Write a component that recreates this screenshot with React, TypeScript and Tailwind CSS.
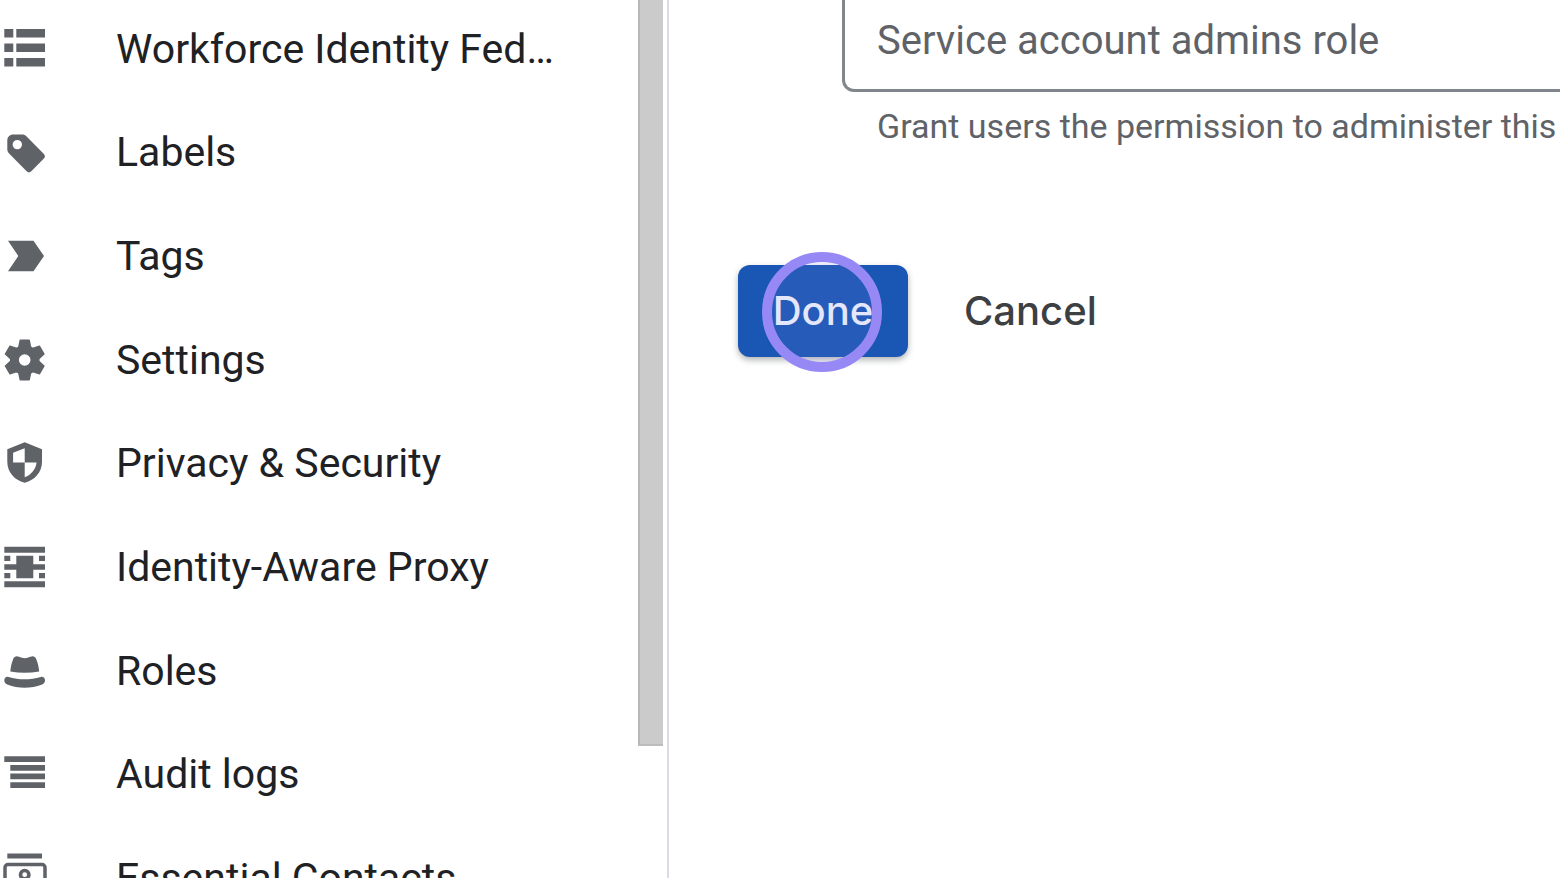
import type { ReactNode } from "react";

type NavItem = { label: string; icon: ReactNode };

const ITEMS: NavItem[] = [
  {
    label: "Workforce Identity Federation",
    icon: (
      <path d="M4.3 6h9v8.5h-9zM16.3 6H45v8.5H16.3zM4.3 20.4h9v8.5h-9zM16.3 20.4H45v8.5H16.3zM4.3 35h9v8.5h-9zM16.3 35H45v8.5H16.3z" />
    ),
  },
  {
    label: "Labels",
    icon: (
      <path
        fillRule="evenodd"
        transform="translate(0 -1.7)"
        d="M13.300 10.300H22c1.800 0 3.300.6 4.600 1.800L43.900 29.800c1.400 1.500 1.400 3 0 4.500L31.300 47c-1.500 1.500-3.200 1.500-4.700 0L9.100 29.300c-1.200-1.300-1.800-2.600-1.800-4.300V16.300c0-3.500 2.500-6 6-6zM17.300 15.600a4.700 4.700 0 1 0 0 9.400 4.700 4.700 0 0 0 0-9.400z"
      />
    ),
  },
  {
    label: "Tags",
    icon: <path d="M8 10.700h25.500L44 26 33.500 41.300H8L18.300 26z" />,
  },
  {
    label: "Settings",
    icon: (
      <g transform="translate(24.700 26)">
        <circle r="10.300" fill="none" stroke="currentColor" strokeWidth="9" />
        {[0, 60, 120, 180, 240, 300].map((angle) => (
          <path
            key={angle}
            transform={`rotate(${angle})`}
            d="M-6.800 -12L-5.200 -19.800Q-5.100 -20.400 -4.500 -20.400H4.500Q5.100 -20.400 5.200 -19.800L6.800 -12z"
          />
        ))}
      </g>
    ),
  },
  {
    label: "Privacy & Security",
    icon: (
      <path
        fillRule="evenodd"
        transform="translate(0 -0.7)"
        d="M24.700 6L42 13v12.500c0 10-7 18.500-17.300 21C14.300 44 7.300 35.500 7.300 25.500V13zM24.700 12l-11.600 4.500v9.800h11.600zM24.700 26.300V41c6.500-2.300 11-7.800 11.900-14.700z"
      />
    ),
  },
  {
    label: "Identity-Aware Proxy",
    icon: (
      <path d="M4.300 5.700H45v6H4.300zM4.300 40.300H45v6H4.300zM4.300 23.300H45v5.500H4.300zM16.300 14.700h17v22.500h-17zM4.300 14.700h6V20h-6zM39 14.700h6V20h-6zM4.300 31.900h6v5.300h-6zM39 31.900h6v5.300h-6z" />
    ),
  },
  {
    label: "Roles",
    icon: (
      <>
        <path d="M10.300 26.500c.4-4.200 1.300-8.800 2.900-12.500 1-2.600 3.300-3.500 5.800-2.300 3.900 1.900 7.500 1.900 11.400 0 2.500-1.200 4.800-.3 5.800 2.300 1.600 3.700 2.600 8.300 3 12.500-9.600 1.800-19.300 1.800-28.900 0z" />
        <path d="M8.500 31.900c10.800 3.200 21.500 3.200 32.300 0 2.200-.6 4.200.8 4.200 3.300 0 2-1 3.500-2.900 4.300-11.600 4.300-23.300 4.300-34.900 0-1.900-.8-2.900-2.300-2.900-4.300 0-2.500 2-3.900 4.200-3.300z" />
      </>
    ),
  },
  {
    label: "Audit logs",
    icon: (
      <path d="M4.300 8.300H45v5.800H4.300zM10.300 16.900H45v5.800H10.300zM10.300 25.500H45v5.800H10.300zM10.300 34.300H45v5.800H10.300z" />
    ),
  },
  {
    label: "Essential Contacts",
    icon: (
      <>
        <path d="M7.300 1.400H42v5H7.300z" />
        <rect x="5" y="12.500" width="40" height="32" rx="3" fill="none" stroke="currentColor" strokeWidth="3.500" />
        <circle cx="24.700" cy="22.700" r="4.200" fill="none" stroke="currentColor" strokeWidth="3.600" />
      </>
    ),
  },
];

function Sidebar() {
  return (
    <aside className="flex h-full w-[669px] shrink-0 overflow-hidden border-r-2 border-[#dadbe3] pr-1">
      <nav aria-label="IAM & Admin" className="min-w-0 flex-1 pr-20">
        <ul className="-mt-[3px] grid h-[933px] auto-rows-fr">
          {ITEMS.map(({ label, icon }) => (
            <li key={label} className="min-w-0">
              <a href="#" className="flex h-full items-center gap-16 text-[#202124]">
                <svg viewBox="0 0 52 52" aria-hidden="true" className="size-[52px] shrink-0 fill-current text-[#5f6368]">
                  {icon}
                </svg>
                <span className="min-w-0 truncate text-[41px] leading-12">{label}</span>
              </a>
            </li>
          ))}
        </ul>
      </nav>
      <div className="h-[746px] w-[25px] shrink-0 border-b-2 border-l-2 border-b-[#bcbcbc] border-l-[#b8b8b8] bg-[#cbcbcb]" />
    </aside>
  );
}

export default function App() {
  return (
    <div className="flex h-screen overflow-hidden bg-white font-[Roboto,sans-serif]">
      <Sidebar />
      <main className="min-w-0 flex-1 overflow-hidden pl-[69px]">
        <div className="w-[1100px] pl-26">
          <input
            type="text"
            aria-label="Service account admins role"
            aria-describedby="admins-role-hint"
            placeholder="Service account admins role"
            className="block h-[92px] w-full rounded-b-xl border-3 border-t-0 border-[#80868b] px-8 pb-2 text-[40px] text-[#5f6368] outline-none placeholder:text-[#5f6368]"
          />
          <p id="admins-role-hint" className="mt-[10px] pl-[35px] text-[34px] leading-12 whitespace-nowrap text-[#5f6368]">
            Grant users the permission to administer this service account
          </p>
        </div>
        <div className="mt-[115px] flex items-center gap-6 font-[Inter,sans-serif] text-[40px] font-medium">
          <div className="relative">
            <button
              type="button"
              className="h-[92px] w-[170px] rounded-xl bg-[#1a56b4] text-center text-[#eef1fc] shadow-[0_3px_6px_rgba(60,64,67,0.4)]"
            >
              Done
            </button>
            <span
              aria-hidden="true"
              className="pointer-events-none absolute -top-[13px] left-6 size-30 rounded-full border-10 border-[#9789f5] bg-[#9789f5]/10"
            />
          </div>
          <button type="button" className="h-[92px] px-8 text-[#3c4043]">
            Cancel
          </button>
        </div>
      </main>
    </div>
  );
}
